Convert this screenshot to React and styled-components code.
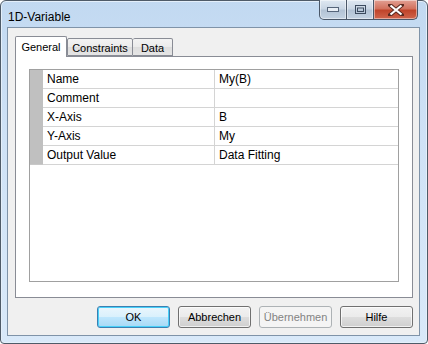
import React from "react";
import styled, { createGlobalStyle } from "styled-components";

const Global = createGlobalStyle`
  html, body { margin: 0; padding: 0; background: #fff; }
  body { font-family: "Liberation Sans", Arial, sans-serif; font-size: 12px; color: #000; }
`;

const Window = styled.div`
  box-sizing: border-box;
  width: 428px;
  height: 344px;
  border: 1px solid #4f5b68;
  border-radius: 6px 6px 4px 4px;
  background: linear-gradient(180deg, #c2d9f1 0%, #cfe2f6 40%, #d9e9f9 100%);
  box-shadow: inset 0 0 0 1px #e4effa;
  display: flex;
  flex-direction: column;
  padding: 0 7px 7px 6px;
`;

const TitleBar = styled.div`
  height: 27px;
  display: flex;
  align-items: flex-start;
  justify-content: space-between;
`;

const Title = styled.div`
  padding: 9px 0 0 1px;
  font-size: 12px;
  color: #000;
`;

const Controls = styled.div`
  display: flex;
  margin-right: 2px;
  margin-top: -1px;
`;

const Ctl = styled.div`
  box-sizing: border-box;
  width: ${(p) => p.w}px;
  height: 20px;
  border: 1px solid #4a5768;
  border-top: none;
  border-left: ${(p) => (p.first ? "1px solid #4a5768" : "none")};
  border-radius: ${(p) => (p.first ? "0 0 0 5px" : p.last ? "0 0 5px 0" : "0")};
  background: ${(p) =>
    p.close
      ? "linear-gradient(180deg, #e2a093 0%, #d2725e 45%, #c0442a 55%, #d0654c 100%)"
      : "linear-gradient(180deg, #dfe8f2 0%, #c9d6e4 45%, #b3c3d5 55%, #c4d3e3 100%)"};
  box-shadow: inset 0 0 0 1px rgba(255, 255, 255, 0.45);
  display: flex;
  align-items: center;
  justify-content: center;
`;

const Tabs = styled.div`
  display: flex;
  align-items: flex-end;
  height: 20px;
  position: relative;
  z-index: 1;
`;

const Tab = styled.div`
  box-sizing: border-box;
  width: ${(p) => p.w}px;
  height: ${(p) => (p.active ? 21 : 18)}px;
  margin-bottom: ${(p) => (p.active ? -1 : 0)}px;
  border: 1px solid #898c95;
  border-bottom: ${(p) => (p.active ? "none" : "1px solid #898c95")};
  border-left: ${(p) => (p.noLeft ? "none" : "1px solid #898c95")};
  border-radius: 2px 2px 0 0;
  background: ${(p) =>
    p.active ? "#fff" : "linear-gradient(180deg, #f3f3f3 0%, #ebebeb 50%, #dedede 51%, #e5e5e5 100%)"};
  display: flex;
  align-items: center;
  justify-content: center;
  padding-top: ${(p) => (p.active ? 0 : 1)}px;
  font-size: 11px;
`;

const Client = styled.div`
  flex: 1;
  box-sizing: border-box;
  background: #f0f0f0;
  border: 1px solid #7f93a8;
  padding: 8px 6px 7px 7px;
  display: flex;
  flex-direction: column;
`;

const Page = styled.div`
  box-sizing: border-box;
  height: 242px;
  background: #fff;
  border: 1px solid #898c95;
  padding: 12px 13px 15px 13px;
`;

const Grid = styled.div`
  box-sizing: border-box;
  height: 100%;
  border: 1px solid #a0a0a0;
  background: #fff;
  display: grid;
  grid-template-columns: 13px 172px 1fr;
  grid-auto-rows: 19px;
  align-content: start;
`;

const RowHead = styled.div`
  background: #c0c0c0;
  border-bottom: ${(p) => (p.last ? "1px solid #c8c8c8" : "none")};
`;

const Cell = styled.div`
  box-sizing: border-box;
  border-bottom: 1px solid #d4d4d4;
  border-right: ${(p) => (p.divider ? "1px solid #d4d4d4" : "none")};
  padding: 0 0 0 4px;
  display: flex;
  align-items: center;
  font-size: 12px;
  white-space: nowrap;
`;

const ButtonRow = styled.div`
  display: flex;
  justify-content: flex-end;
  gap: 8px;
  margin-top: 8px;
`;

const Button = styled.div`
  box-sizing: border-box;
  width: 73px;
  height: 22px;
  border-radius: 3px;
  border: 1px solid ${(p) => (p.primary ? "#3c7fb1" : p.disabled ? "#adb2b5" : "#707070")};
  background: ${(p) =>
    p.disabled
      ? "#f4f4f4"
      : p.primary
      ? "linear-gradient(180deg, #eaf6fd 0%, #d9f0fc 50%, #bee6fd 51%, #a7d9f5 100%)"
      : "linear-gradient(180deg, #f2f2f2 0%, #ebebeb 50%, #dddddd 51%, #cfcfcf 100%)"};
  box-shadow: ${(p) =>
    p.primary ? "inset 0 0 0 1px #48d0f9" : p.disabled ? "none" : "inset 0 0 0 1px rgba(255,255,255,0.7)"};
  color: ${(p) => (p.disabled ? "#838383" : "#000")};
  display: flex;
  align-items: center;
  justify-content: center;
  font-size: 11px;
`;

const rows = [
  ["Name", "My(B)"],
  ["Comment", ""],
  ["X-Axis", "B"],
  ["Y-Axis", "My"],
  ["Output Value", "Data Fitting"],
];

export default function App() {
  return (
    <>
      <Global />
      <Window>
        <TitleBar>
          <Title>1D-Variable</Title>
          <Controls>
            <Ctl w={28} first>
              <svg width="12" height="5" viewBox="0 0 12 5">
                <rect x="0.5" y="0.5" width="11" height="4" fill="#e8eef5" stroke="#56657a" />
              </svg>
            </Ctl>
            <Ctl w={27}>
              <svg width="11" height="9" viewBox="0 0 11 9">
                <rect x="0.5" y="0.5" width="10" height="8" fill="none" stroke="#3b4a5e" />
                <rect x="2.5" y="3" width="6" height="3.5" fill="none" stroke="#3b4a5e" />
              </svg>
            </Ctl>
            <Ctl w={44} close last>
              <svg width="16" height="12" viewBox="0 0 16 12">
                <path d="M2 1 L14 11 M14 1 L2 11" stroke="#5a2a20" strokeWidth="4" strokeLinecap="square" />
                <path d="M2.5 1.5 L13.5 10.5 M13.5 1.5 L2.5 10.5" stroke="#fff" strokeWidth="2.2" />
              </svg>
            </Ctl>
          </Controls>
        </TitleBar>
        <Client>
          <Tabs>
            <Tab active w={52}>General</Tab>
            <Tab w={66}>Constraints</Tab>
            <Tab w={40} noLeft>Data</Tab>
          </Tabs>
          <Page>
            <Grid>
              {rows.map(([k, v], i) => (
                <React.Fragment key={k}>
                  <RowHead last={i === rows.length - 1} />
                  <Cell divider>{k}</Cell>
                  <Cell>{v}</Cell>
                </React.Fragment>
              ))}
            </Grid>
          </Page>
          <ButtonRow>
            <Button primary>OK</Button>
            <Button>Abbrechen</Button>
            <Button disabled>Übernehmen</Button>
            <Button>Hilfe</Button>
          </ButtonRow>
        </Client>
      </Window>
    </>
  );
}
